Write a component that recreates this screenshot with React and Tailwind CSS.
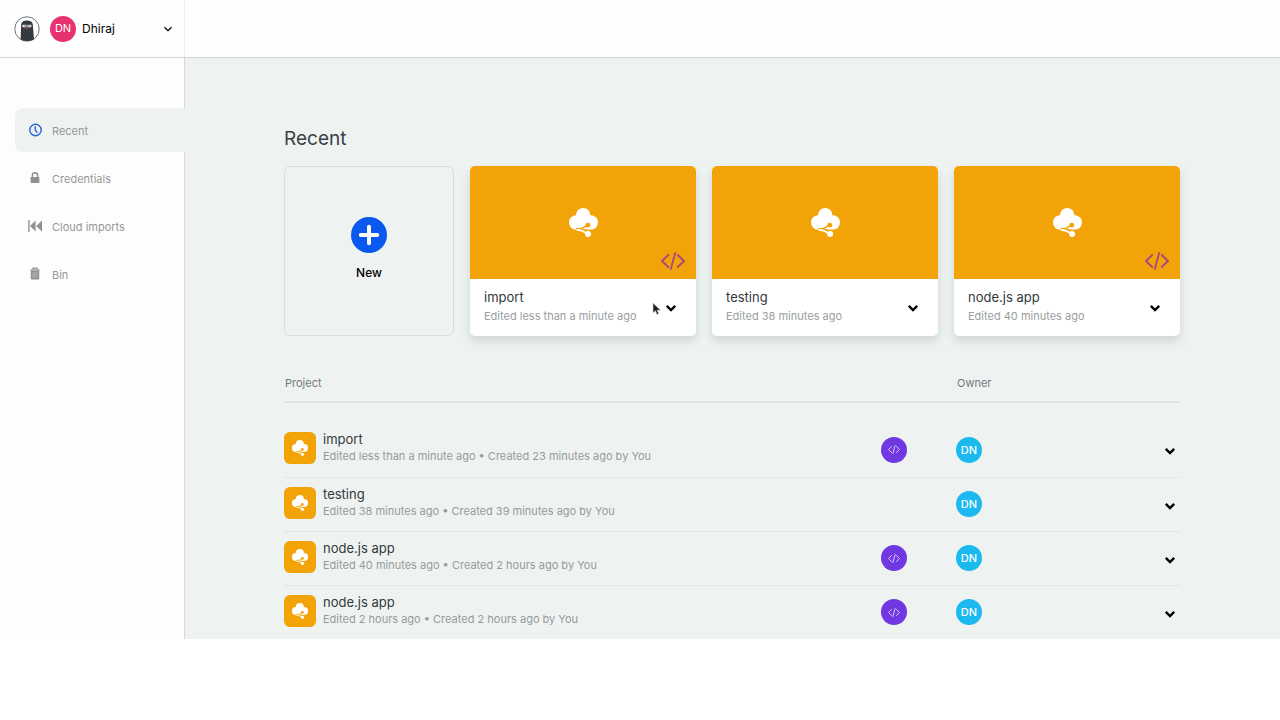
const recentFiles = [
  { name: "import", edited: "Edited less than a minute ago", code: true, pointer: true },
  { name: "testing", edited: "Edited 38 minutes ago", code: false },
  { name: "node.js app", edited: "Edited 40 minutes ago", code: true },
];

const projects = [
  { name: "import", meta: "Edited less than a minute ago • Created 23 minutes ago by You", code: true },
  { name: "testing", meta: "Edited 38 minutes ago • Created 39 minutes ago by You", code: false },
  { name: "node.js app", meta: "Edited 40 minutes ago • Created 2 hours ago by You", code: true },
  { name: "node.js app", meta: "Edited 2 hours ago • Created 2 hours ago by You", code: true },
];

function CloudIcon({ className }) {
  return (
    <svg viewBox="0 0 88 88" className={className} aria-hidden="true">
      <g fill="#fff">
        <circle cx="43" cy="22" r="22" />
        <circle cx="22" cy="44" r="22" />
        <circle cx="66" cy="44" r="22" />
        <path d="M23 22h40l10 22-8 21-26 3-18-2z" />
      </g>
      <g fill="none" stroke="#f2a307" strokeWidth="4.5" strokeLinecap="round">
        <path d="M57 52 40 61q-4 2-16 2" />
        <path d="M34 63.5 58 68h16" strokeWidth="3.5" />
      </g>
      <circle cx="57" cy="52" r="7.5" fill="#f2a307" />
      <path d="M26 67q12-1 31 12" fill="none" stroke="#fff" strokeWidth="5" strokeLinecap="round" />
      <circle cx="58" cy="79" r="9" fill="#fff" />
    </svg>
  );
}

function CodeIcon({ className, strokeWidth = 1.8 }) {
  return (
    <svg viewBox="0 0 24 18" className={className} fill="none" stroke="currentColor" strokeWidth={strokeWidth} strokeLinecap="round" strokeLinejoin="round" aria-hidden="true">
      <path d="M7.2 3 1 9l6.2 6M16.8 3 23 9l-6.2 6M14.2 1 9.8 17" />
    </svg>
  );
}

function Chevron({ className, strokeWidth = 2.4 }) {
  return (
    <svg viewBox="0 0 12 12" className={className} fill="none" stroke="currentColor" strokeWidth={strokeWidth} aria-hidden="true">
      <path d="m1.8 3.8 4.2 4.2 4.2-4.2" />
    </svg>
  );
}

function ClockIcon() {
  return (
    <svg viewBox="0 0 14 14" className="h-3.5 w-3.5" fill="none" stroke="#2b63d0" strokeWidth="1.4" aria-hidden="true">
      <circle cx="7.5" cy="7" r="5.7" />
      <path d="M7.2 3.8V7l1.8 2.4" strokeLinecap="round" />
    </svg>
  );
}

function LockIcon() {
  return (
    <svg viewBox="0 0 14 14" className="h-3.5 w-3.5" aria-hidden="true">
      <path d="M4.4 7V4.4a2.6 2.6 0 0 1 5.2 0V7" fill="none" stroke="#8f9191" strokeWidth="1.4" />
      <rect x="2.6" y="6" width="8.8" height="6" rx=".8" fill="#8f9191" />
    </svg>
  );
}

function RewindIcon() {
  return (
    <svg viewBox="0 0 14 14" className="h-3.5 w-3.5" fill="#8f9191" aria-hidden="true">
      <path d="M.2 1h1.4v12H.2zM7.6 1.4v11.2L2 7zM14 1.4v11.2L8.2 7z" />
    </svg>
  );
}

function BinIcon() {
  return (
    <svg viewBox="0 0 14 14" className="h-3.5 w-3.5" aria-hidden="true">
      <path d="M5 2.4V1.2h4v1.2M2 3h10" fill="none" stroke="#8f9191" strokeWidth="1.2" />
      <path d="M2.8 3.6h8.4v8a1 1 0 0 1-1 1H3.8a1 1 0 0 1-1-1z" fill="#8f9191" />
      <path d="M5.2 5.2v5.6M7 5.2v5.6M8.8 5.2v5.6" stroke="#c9cbcb" strokeWidth=".7" />
    </svg>
  );
}

function Logo() {
  return (
    <svg viewBox="0 0 26 26" className="h-[26px] w-[26px]" aria-hidden="true">
      <circle cx="13" cy="13" r="12.2" fill="#fff" stroke="#4a4f52" strokeWidth=".8" />
      <path d="M6.6 23.4 7.2 8.4q.3-3.8 5.8-3.8t5.8 3.8L20 23.4Q13 26.6 6.6 23.4z" fill="#343b40" />
      <ellipse cx="10.4" cy="9.8" rx="2.2" ry="1.8" fill="#fff" />
      <ellipse cx="15.4" cy="9.8" rx="2.2" ry="1.8" fill="#fff" />
      <path d="M8.2 8.7h4.2M13.4 8.7h4.2" stroke="#343b40" strokeWidth="1.1" />
      <circle cx="11" cy="10.2" r=".6" fill="#343b40" />
      <circle cx="14.9" cy="10.2" r=".6" fill="#343b40" />
      <path d="M11.8 11.2h2.4L13 13.4z" fill="#d9415b" />
    </svg>
  );
}

function Pointer() {
  return (
    <svg viewBox="0 0 10 14" className="absolute bottom-5 left-[182px] h-3.5 w-2.5" aria-hidden="true">
      <path d="M1 1v10l2.4-2.2L5 12.6l1.8-.8L5.2 8.2h3.4z" fill="#222" stroke="#d4d4d4" strokeWidth=".6" />
    </svg>
  );
}

const navItems = [
  { label: "Recent", icon: ClockIcon, active: true },
  { label: "Credentials", icon: LockIcon },
  { label: "Cloud imports", icon: RewindIcon },
  { label: "Bin", icon: BinIcon },
];

function Sidebar() {
  return (
    <nav aria-label="Main" className="w-[185px] shrink-0 border-r border-[#d5d9d8] bg-[#fdfdfd] pt-[50px] pl-[15px]">
      <ul className="flex flex-col gap-1">
        {navItems.map(({ label, icon: Icon, active }) => (
          <li key={label} className={active ? "-mr-px rounded-l-lg bg-[#eef3f2]" : ""}>
            <a href="#" aria-current={active ? "page" : undefined} className="flex h-11 items-center gap-2.5 pl-[13px] text-[11px] leading-4 text-[#959999]">
              <Icon />
              <span className="pt-0.5">{label}</span>
            </a>
          </li>
        ))}
      </ul>
    </nav>
  );
}

function RecentCard({ file }) {
  return (
    <article className="relative flex flex-col rounded-[5px] bg-white shadow-[0_5px_10px_rgba(40,60,60,0.16)]">
      <div className="flex h-[113px] items-center justify-center rounded-t-[5px] bg-[#f2a307]">
        <CloudIcon className="h-[29px] w-[29px]" />
        {file.code && <CodeIcon className="absolute top-[86px] right-[11px] h-[18px] w-6 text-[#a8487e]" />}
      </div>
      <div className="flex flex-1 items-center justify-between pr-[19px] pl-3.5">
        <div className="pb-[3px]">
          <h2 className="text-[13px] leading-[19px] text-[#33393c]">{file.name}</h2>
          <p className="text-[11px] leading-[18px] text-[#9a9e9f]">{file.edited}</p>
        </div>
        <button type="button" aria-label={`Options for ${file.name}`} className="text-black">
          <Chevron className="h-3 w-3" />
        </button>
      </div>
      {file.pointer && <Pointer />}
    </article>
  );
}

export default function App() {
  return (
    <div className="min-h-screen bg-white font-['Inter',sans-serif] text-[#33393c]">
      <header className="flex h-[58px] border-b border-[#d0d4d3] bg-[#fefefe]">
        <div className="flex w-[185px] shrink-0 items-center border-r border-[#eceeee] pl-3.5">
          <Logo />
          <button type="button" className="flex flex-1 items-center pr-[11px] pl-2.5 text-left text-xs text-black">
            <span className="flex h-[26px] w-[26px] items-center justify-center rounded-full bg-[#e7326f] text-[11px] text-white">DN</span>
            <span className="ml-1.5 flex-1">Dhiraj</span>
            <Chevron className="h-2.5 w-2.5" strokeWidth={1.6} />
          </button>
        </div>
      </header>

      <div className="flex">
        <Sidebar />
        <main className="min-w-0 flex-1 bg-[#eef3f2] pt-[67px] pr-[100px] pl-[99px]">
          <h1 className="text-[19px] leading-7 text-[#3a4043]">Recent</h1>

          <section aria-label="Recent files" className="mt-[13px] grid h-[170px] grid-cols-[170px_1fr_1fr_1fr] gap-4">
            <button type="button" className="flex flex-col items-center rounded-md border border-[#d9dddc] pt-[50px] text-xs font-medium text-black">
              <svg viewBox="0 0 36 36" className="h-9 w-9" aria-hidden="true">
                <circle cx="18" cy="18" r="18" fill="#0a58ee" />
                <path d="M18 9.8v16.4M9.8 18h16.4" stroke="#fff" strokeWidth="4" strokeLinecap="round" />
              </svg>
              <span className="mt-3">New</span>
            </button>
            {recentFiles.map((file) => (
              <RecentCard key={file.name} file={file} />
            ))}
          </section>

          <table className="mt-[35px] w-full table-fixed border-collapse text-left">
            <colgroup>
              <col />
              <col className="w-[75px]" />
              <col className="w-[124px]" />
              <col className="w-[100px]" />
            </colgroup>
            <thead>
              <tr className="h-[31px] border-b-2 border-[#dfe3e2] align-top text-[11px] leading-[25px] text-[#73797a]">
                <th scope="col" className="pl-px font-normal">Project</th>
                <td />
                <th scope="col" className="pl-px font-normal">Owner</th>
                <td />
              </tr>
            </thead>
            <tbody>
              <tr className="h-[21px]" aria-hidden="true"><td colSpan={4} /></tr>
              {projects.map((project, index) => (
                <tr key={index} className="h-[54px] border-b border-[#e2e6e5] last:border-b-0">
                  <td className="p-0 pb-[3px]">
                    <div className="flex items-center gap-[7px]">
                      <span className="flex h-8 w-8 items-center justify-center rounded-md bg-[#f2a307]">
                        <CloudIcon className="h-4 w-4" />
                      </span>
                      <div>
                        <div className="text-[13px] leading-[17px]">{project.name}</div>
                        <div className="text-[11px] leading-[17px] text-[#959b9b]">{project.meta}</div>
                      </div>
                    </div>
                  </td>
                  <td className="p-0">
                    {project.code && (
                      <span className="flex h-[26px] w-[26px] items-center justify-center rounded-full bg-[#6f38e0] text-[#d9c6ff]">
                        <CodeIcon className="h-[9px] w-3" strokeWidth={2} />
                      </span>
                    )}
                  </td>
                  <td className="p-0">
                    <span className="flex h-[26px] w-[26px] items-center justify-center rounded-full bg-[#1cb9ee] text-[11px] font-medium text-white">DN</span>
                  </td>
                  <td className="p-0 pr-1 text-right">
                    <button type="button" aria-label={`Options for ${project.name}`} className="align-middle text-black">
                      <Chevron className="h-3 w-3" />
                    </button>
                  </td>
                </tr>
              ))}
            </tbody>
          </table>
        </main>
      </div>
    </div>
  );
}
